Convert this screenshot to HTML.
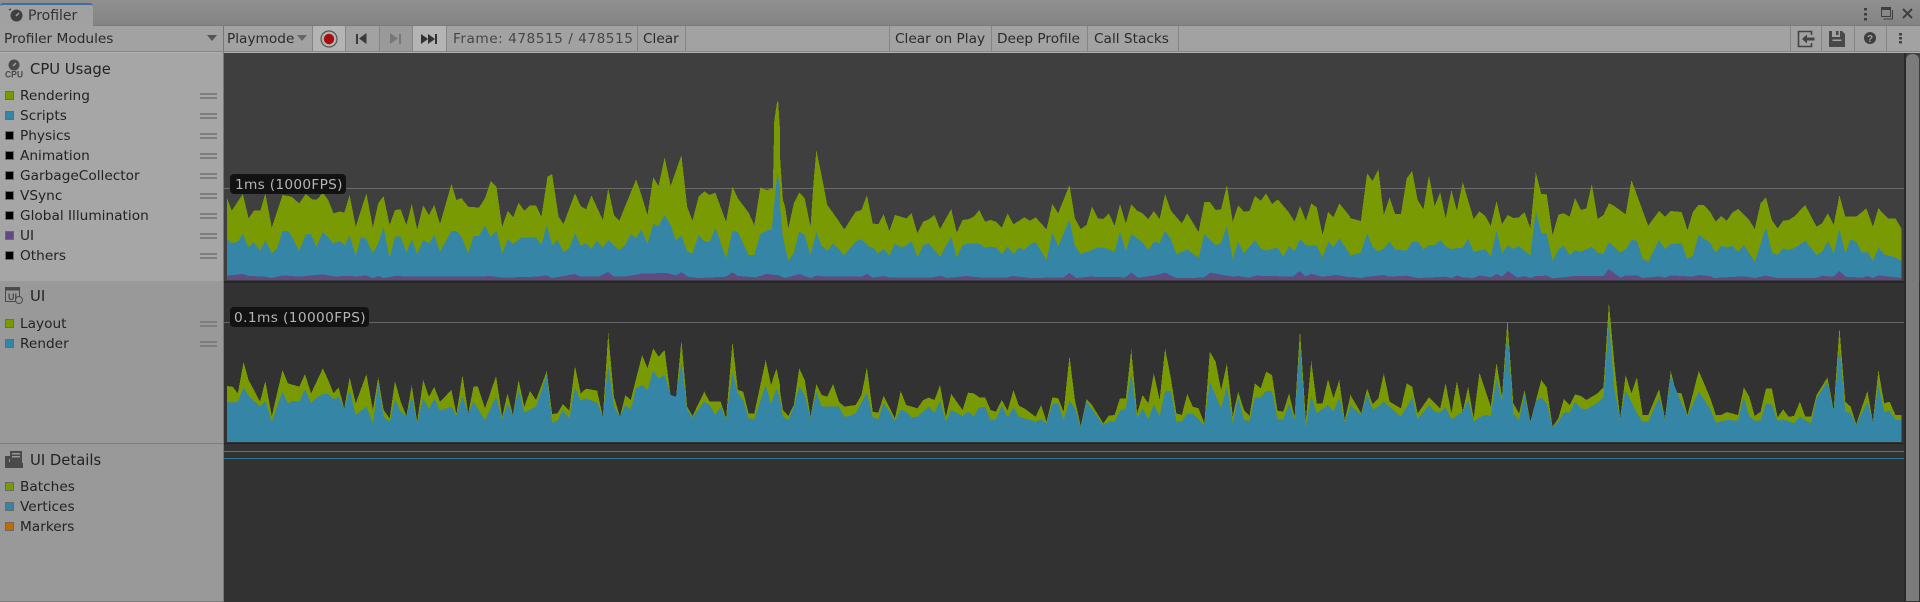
<!DOCTYPE html>
<html><head><meta charset="utf-8"><title>Profiler</title>
<style>
html,body{margin:0;padding:0;background:#333}
#r{position:relative;width:1920px;height:602px;overflow:hidden;background:#323232;font-family:"DejaVu Sans","Liberation Sans",sans-serif;font-size:13.7px;color:#232323}
#r div{position:absolute;box-sizing:border-box}
.t{white-space:nowrap;line-height:20px;height:20px}
.l{white-space:nowrap;line-height:22px;height:20px}
.hd{white-space:nowrap;line-height:22px;height:20px;font-size:14.8px}
.sw{width:9px;height:9px;left:5px;border:1px solid #6a6a6a}
.h{left:200px;width:17px;height:6px;border-top:2px solid #7d7d7d;border-bottom:2px solid #7d7d7d}
.sep{top:26px;width:1px;height:25px;background:#858585}
.btn{top:26px;height:25px}
svg{position:absolute;overflow:visible}
.g{fill:#7a9a04}.b{fill:#3485a6}.p{fill:#5f4a82}
</style></head><body><div id="r">
<div style="left:0;top:0;width:1920px;height:26px;background:linear-gradient(#909090,#838383)"></div>
<div style="left:0;top:3px;width:93px;height:23px;background:#a1a1a1;border-top:2px solid #3c6f9f;border-radius:3px 3px 0 0"></div>
<div style="left:0;top:25px;width:1920px;height:1px;background:#7b7b7b"></div>
<div style="left:0;top:25px;width:93px;height:1px;background:#a1a1a1"></div>
<svg style="left:7px;top:7px" width="18" height="16" viewBox="0 0 18 16"><circle cx="9.5" cy="8.500" r="6" fill="#3f3f3f"/><path d="M9 9l3-3" stroke="#a1a1a1" stroke-width="1.500"/><path d="M2 3l2-1" stroke="#3f3f3f" stroke-width="1.500"/></svg>
<div class="t" style="left:28px;top:6px;color:#333;font-size:14px">Profiler</div>

<div style="left:0;top:26px;width:1920px;height:25px;background:#a2a2a2"></div>
<div style="left:0;top:51px;width:1920px;height:1px;background:#868686"></div>
<div style="left:0;top:52px;width:1920px;height:1px;background:#b0b0b0"></div>
<div class="t" style="left:4px;top:29px;color:#2a2a2a">Profiler Modules</div>
<svg style="left:207px;top:35px" width="11" height="7"><path d="M0 0h10L5 6z" fill="#555"/></svg>
<div class="sep" style="left:223px;background:#777"></div>
<div class="t" style="left:227px;top:29px;color:#2a2a2a">Playmode</div>
<svg style="left:297px;top:35px" width="11" height="7"><path d="M0 0h10L5 6z" fill="#666"/></svg>
<div class="btn" style="left:313px;width:33px;background:#b4b4b4"></div>
<div class="btn" style="left:346px;width:34px;background:#a2a2a2"></div>
<div class="btn" style="left:380px;width:33px;background:#9a9a9a"></div>
<div class="btn" style="left:413px;width:33px;background:#b4b4b4"></div>
<div class="sep" style="left:312px"></div><div class="sep" style="left:345px"></div><div class="sep" style="left:379px"></div><div class="sep" style="left:412px"></div><div class="sep" style="left:446px"></div><div class="sep" style="left:637px"></div><div class="sep" style="left:685px"></div><div class="sep" style="left:889px"></div><div class="sep" style="left:991px"></div><div class="sep" style="left:1087px"></div><div class="sep" style="left:1178px"></div><div class="sep" style="left:1790px"></div><div class="sep" style="left:1821px"></div><div class="sep" style="left:1854px"></div><div class="sep" style="left:1886px"></div>
<svg style="left:320px;top:30px" width="18" height="18"><circle cx="9" cy="9" r="8" fill="none" stroke="#555" stroke-width="1.200"/><circle cx="9" cy="9" r="5.200" fill="#a80d0d"/></svg>
<svg style="left:355px;top:33px" width="14" height="12"><path d="M1 1h2v10H1zM11.500 0v11L4 5.500z" fill="#3a3a3a"/></svg>
<svg style="left:389px;top:33px" width="14" height="12"><path d="M1 0v11l8-5.500zM10 1h2v10h-2z" fill="#777"/></svg>
<svg style="left:420px;top:33px" width="18" height="12"><path d="M1 1v10l7-5zM8 1v10l7-5zM15 1h2v10h-2z" fill="#333"/></svg>
<div class="t" style="left:453px;top:29px;color:#464646;letter-spacing:.5px">Frame: 478515 / 478515</div>
<div class="t" style="left:643px;top:29px;color:#2a2a2a">Clear</div>
<div class="t" style="left:895px;top:29px;color:#2a2a2a">Clear on Play</div>
<div class="t" style="left:997px;top:29px;color:#2a2a2a">Deep Profile</div>
<div class="t" style="left:1094px;top:29px;color:#2a2a2a">Call Stacks</div>
<svg style="left:1797px;top:30px" width="18" height="18"><path d="M14.500 5V1.500h-13v15h13V13" fill="none" stroke="#444" stroke-width="1.600"/><path d="M5 9l5-4.500v3h7.500v3H10v3z" fill="#444"/></svg>
<svg style="left:1829px;top:30px" width="17" height="17"><path d="M0 1h3v6h8V1h2l3 3v13H0z" fill="#484848"/><path d="M7 1h2.500v4H7zM4 11h8v6H4z" fill="#484848"/><path d="M3.500 9.500h9V11h-9z" fill="#a2a2a2"/></svg>
<svg style="left:1864px;top:32px" width="13" height="13"><circle cx="6" cy="6" r="6" fill="#3e3e3e"/><text x="6" y="10" font-size="10" font-weight="bold" text-anchor="middle" font-family="Liberation Sans,sans-serif" fill="#a2a2a2">?</text></svg>
<svg style="left:1899px;top:32px" width="4" height="13"><path d="M0 1h3v2.500H0zM0 5h3v2.500H0zM0 9h3v2.500H0z" fill="#444"/></svg>
<svg style="left:1864px;top:7px" width="3" height="14"><path d="M0 1h3v2.500H0zM0 6h3v2.500H0zM0 11h3v2.500H0z" fill="#3e3e3e"/></svg>
<svg style="left:1881px;top:7px" width="13" height="13"><path d="M.5 .500h9v9h-9z" fill="none" stroke="#3e3e3e"/><path d="M0 0h10v3H0z" fill="#3e3e3e"/><path d="M11.500 3v9h-9" fill="none" stroke="#3e3e3e"/></svg>
<svg style="left:1902px;top:8px" width="12" height="12"><path d="M1 1l9 9M10 1l-9 9" stroke="#3e3e3e" stroke-width="2"/></svg>

<div style="left:0;top:53px;width:223px;height:228px;background:#a6a6a6"></div>
<div style="left:0;top:281px;width:223px;height:162px;background:#999"></div>
<div style="left:0;top:444px;width:223px;height:158px;background:#999"></div>
<div style="left:0;top:443px;width:223px;height:1px;background:#7c7c7c"></div>
<div style="left:0;top:601px;width:1920px;height:1px;background:#7c7c7c"></div>
<div style="left:223px;top:52px;width:1px;height:550px;background:#777"></div>
<div style="left:224px;top:53px;width:1696px;height:228px;background:#3f3f3f"></div>
<div style="left:224px;top:281px;width:1680px;height:2px;background:#262626"></div>
<div style="left:224px;top:283px;width:1696px;height:319px;background:#323232"></div>
<div style="left:224px;top:443px;width:1680px;height:1px;background:#232323"></div>

<svg style="left:5px;top:59px" width="19" height="19"><circle cx="9" cy="6" r="5.500" fill="#4a4a4a"/><path d="M8 7l3-3" stroke="#a6a6a6" stroke-width="1.300"/><text x="9" y="18.500" font-size="9.500" font-weight="bold" text-anchor="middle" textLength="18" lengthAdjust="spacingAndGlyphs" font-family="Liberation Sans,sans-serif" fill="#4a4a4a">CPU</text></svg>
<div class="hd" style="left:30px;top:59px">CPU Usage</div>
<div class="sw" style="top:91px;background:#7a9a04"></div><div class="l" style="left:20px;top:85px">Rendering</div><div class="h" style="top:93px"></div>
<div class="sw" style="top:111px;background:#3485a6"></div><div class="l" style="left:20px;top:105px">Scripts</div><div class="h" style="top:113px"></div>
<div class="sw" style="top:131px;background:#000"></div><div class="l" style="left:20px;top:125px">Physics</div><div class="h" style="top:133px"></div>
<div class="sw" style="top:151px;background:#000"></div><div class="l" style="left:20px;top:145px">Animation</div><div class="h" style="top:153px"></div>
<div class="sw" style="top:171px;background:#000"></div><div class="l" style="left:20px;top:165px">GarbageCollector</div><div class="h" style="top:173px"></div>
<div class="sw" style="top:191px;background:#000"></div><div class="l" style="left:20px;top:185px">VSync</div><div class="h" style="top:193px"></div>
<div class="sw" style="top:211px;background:#000"></div><div class="l" style="left:20px;top:205px">Global Illumination</div><div class="h" style="top:213px"></div>
<div class="sw" style="top:231px;background:#5f4a82"></div><div class="l" style="left:20px;top:225px">UI</div><div class="h" style="top:233px"></div>
<div class="sw" style="top:251px;background:#000"></div><div class="l" style="left:20px;top:245px">Others</div><div class="h" style="top:253px"></div>

<svg style="left:5px;top:287px" width="19" height="17"><path d="M.500 .500h14v14H.500z" fill="#999" stroke="#4a4a4a"/><path d="M1 1h13v2.500H1z" fill="#4a4a4a"/><text x="7.500" y="13" font-size="9" font-weight="bold" text-anchor="middle" font-family="Liberation Sans,sans-serif" fill="#4a4a4a">UI</text><circle cx="14" cy="13" r="3.500" fill="#999" stroke="#4a4a4a"/></svg>
<div class="hd" style="left:30px;top:286px">UI</div>
<div class="sw" style="top:319px;background:#7a9a04"></div><div class="l" style="left:20px;top:313px">Layout</div><div class="h" style="top:321px"></div>
<div class="sw" style="top:339px;background:#3485a6"></div><div class="l" style="left:20px;top:333px">Render</div><div class="h" style="top:341px"></div>

<svg style="left:5px;top:451px" width="18" height="18"><path d="M0 5h4v12h13v-4h1v-1H0z" fill="#4a4a4a"/><path d="M0 5h5V8H0zM0 11h9v6H0zM13 13h5v4h-5z" fill="#4a4a4a"/><path d="M5 0h12v12H5z" fill="#4a4a4a"/><path d="M7 2h8v1.500H7zM7 5h8v1.500H7z" fill="#999"/></svg>
<div class="hd" style="left:30px;top:450px">UI Details</div>
<div class="sw" style="top:482px;background:#7a9a04"></div><div class="l" style="left:20px;top:476px">Batches</div>
<div class="sw" style="top:502px;background:#3485a6"></div><div class="l" style="left:20px;top:496px">Vertices</div>
<div class="sw" style="top:522px;background:#c26a00"></div><div class="l" style="left:20px;top:516px">Markers</div>

<div style="left:224px;top:188px;width:1680px;height:1px;background:#6a6a6a"></div>
<div style="left:224px;top:322px;width:1680px;height:1px;background:#656565"></div>
<div style="left:224px;top:451px;width:1680px;height:1px;background:#6d7f20"></div>
<div style="left:224px;top:458px;width:1680px;height:1px;background:#2f7391"></div>

<svg style="left:0;top:0" width="1920" height="602" shape-rendering="crispEdges">
<g transform="translate(220,80) scale(.35714,.33333)">
<polygon class="g" points="20,600 20,355 33,392 64,342 80,415 95,392 113,392 127,340 145,443 175,345 200,350 222,370 240,342 258,358 272,358 288,338 303,360 318,400 335,394 348,398 363,345 380,440 410,340 428,442 443,370 458,348 475,435 490,390 506,388 522,435 537,372 552,448 569,376 585,405 600,375 616,432 648,312 662,360 676,354 695,380 725,383 742,355 758,303 774,320 790,440 806,392 821,412 836,368 852,392 868,376 885,377 900,410 917,290 930,282 948,410 962,432 994,340 1010,378 1025,388 1040,346 1072,420 1087,325 1103,405 1118,422 1165,298 1180,345 1197,405 1213,292 1228,318 1245,232 1262,318 1292,225 1308,380 1323,422 1340,350 1356,334 1371,345 1387,338 1417,425 1435,320 1450,355 1480,398 1496,435 1513,322 1530,330 1548,325 1552,120 1560,65 1563,65 1568,150 1568,600"/>
<polygon class="b" points="20,600 20,478 33,490 50,485 64,462 80,502 95,488 113,512 127,480 145,520 160,505 175,453 192,453 222,512 240,463 255,462 270,500 288,456 318,490 335,483 350,495 363,465 380,528 395,470 410,478 428,520 443,490 458,440 475,535 490,470 506,470 522,518 537,477 552,522 569,480 585,490 600,465 616,515 648,453 662,453 676,470 695,520 710,468 725,468 742,437 758,470 774,452 790,520 806,478 821,492 845,472 885,472 900,495 915,435 930,495 945,480 962,516 978,505 994,460 1010,497 1025,490 1040,507 1056,482 1072,503 1087,480 1103,497 1118,510 1135,495 1150,462 1165,475 1180,448 1197,492 1213,432 1228,437 1245,405 1262,435 1277,482 1292,465 1308,515 1323,520 1340,465 1356,483 1371,487 1387,443 1417,535 1435,453 1450,456 1480,525 1496,525 1513,462 1530,452 1545,448 1555,340 1561,275 1568,320 1568,600"/>
<polygon class="p" points="20,600 20,587 64,582 80,588 127,590 145,594 175,586 222,590 288,583 320,590 363,587 380,590 410,586 428,595 443,588 458,594 490,588 537,590 616,590 720,590 760,588 790,593 885,590 915,586 930,594 994,582 1010,590 1060,590 1087,576 1103,590 1135,590 1180,581 1250,579 1277,586 1292,577 1310,590 1340,594 1417,590 1435,577 1450,588 1500,592 1530,582 1568,586 1568,600"/>
</g>
<g transform="translate(780,80) scale(.36364,.33333)">
<polygon class="g" points="0,600 0,228 8,360 14,380 23,445 38,370 53,337 68,355 84,440 92,310 100,210 115,290 130,375 145,397 177,448 208,395 224,390 239,345 255,430 270,433 285,403 301,453 316,405 332,410 347,415 362,400 378,460 394,425 409,418 425,405 440,447 471,387 486,458 502,420 517,418 533,410 548,390 564,425 579,420 594,425 610,443 626,400 642,433 672,412 688,422 703,412 733,448 749,372 765,400 796,315 811,415 827,447 843,435 858,380 874,415 889,417 904,400 920,437 935,372 951,430 966,373 982,392 997,400 1013,417 1028,393 1044,417 1059,342 1075,392 1105,430 1120,400 1151,456 1167,366 1182,366 1198,390 1213,388 1229,315 1245,425 1260,376 1276,395 1291,393 1306,348 1322,362 1337,340 1353,372 1369,358 1400,398 1415,425 1430,378 1446,422 1461,370 1476,382 1492,465 1507,396 1522,412 1538,370 1568,410 1568,600"/>
<polygon class="b" points="0,600 0,380 8,470 23,543 38,518 53,455 68,465 84,525 100,456 115,498 130,512 146,490 177,525 208,485 224,477 245,500 255,502 270,520 285,507 301,527 316,490 332,502 347,497 362,483 378,533 394,495 409,490 440,530 471,470 486,533 502,495 517,491 548,490 564,503 579,500 594,502 610,522 626,500 642,522 657,503 672,510 688,493 703,486 733,540 749,458 765,500 796,418 811,497 827,522 858,510 874,502 889,502 920,515 935,455 951,512 966,462 997,487 1013,510 1028,485 1044,489 1059,452 1075,477 1090,523 1120,508 1151,533 1167,462 1198,496 1213,489 1229,438 1245,537 1260,485 1276,520 1306,480 1322,505 1337,512 1368,502 1384,530 1400,498 1415,513 1430,478 1446,495 1461,497 1476,497 1492,533 1507,485 1522,502 1538,475 1568,522 1568,600"/>
<polygon class="p" points="0,600 0,588 14,594 53,582 84,594 100,587 130,590 224,590 239,581 255,593 285,588 300,592 420,592 440,587 460,594 510,588 550,592 620,593 640,588 690,594 780,592 796,579 815,594 850,590 950,592 966,578 985,593 1030,586 1059,578 1090,594 1165,593 1183,578 1245,590 1260,588 1290,593 1310,587 1410,590 1430,573 1445,590 1460,581 1490,590 1530,585 1568,592 1568,600"/>
</g>
<g transform="translate(1350,80) scale(.36364,.33333)">
<polygon class="g" points="0,600 0,414 30,423 47,280 62,303 78,268 93,405 109,352 124,402 140,402 156,295 171,273 186,360 202,388 217,286 233,378 248,337 263,415 279,330 294,392 310,306 340,417 356,394 372,408 387,437 403,363 418,432 434,405 449,414 465,412 480,396 496,445 511,276 526,342 541,343 557,465 573,404 588,400 604,410 619,354 635,390 650,385 665,312 681,417 697,405 712,370 727,378 758,403 774,300 820,437 850,393 866,410 882,393 912,396 928,450 943,396 958,375 973,375 990,395 1006,425 1021,408 1036,422 1052,397 1067,387 1098,420 1113,447 1129,370 1144,352 1160,420 1176,445 1191,422 1206,420 1221,410 1252,375 1283,440 1298,430 1314,400 1330,435 1346,345 1362,410 1392,410 1420,385 1438,440 1453,385 1480,415 1500,415 1516,445 1516,600"/>
<polygon class="b" points="0,600 0,527 30,517 47,460 62,500 78,515 93,505 109,484 124,508 155,512 171,485 186,484 202,508 217,495 233,495 248,480 263,500 279,507 310,503 325,475 340,516 372,507 387,530 403,452 418,520 434,495 449,507 465,498 496,527 511,393 526,458 541,460 557,543 573,508 588,497 604,525 619,510 635,515 665,500 681,518 697,522 712,486 743,518 758,508 774,480 789,482 805,537 820,545 850,480 866,507 882,492 912,490 928,537 943,527 958,465 990,488 1006,518 1021,497 1036,502 1052,498 1067,515 1083,495 1113,545 1144,442 1160,517 1176,525 1191,505 1206,510 1221,505 1252,482 1283,525 1298,515 1314,483 1330,520 1346,447 1362,520 1377,478 1392,485 1408,518 1423,515 1438,543 1453,503 1469,523 1500,532 1516,543 1516,600"/>
<polygon class="p" points="0,600 0,590 30,594 47,590 93,585 109,590 156,587 186,594 263,590 280,594 294,586 310,592 340,594 356,586 387,592 403,582 418,590 434,573 460,593 480,588 496,594 511,588 541,587 557,595 619,588 697,588 712,567 743,593 758,586 789,586 805,594 850,589 866,593 882,586 940,590 958,585 990,588 1000,594 1083,589 1113,594 1144,587 1176,594 1280,594 1300,587 1330,590 1346,573 1362,590 1408,593 1423,588 1438,594 1453,586 1516,594 1516,600"/>
</g>
<g transform="translate(220,290) scale(.35714,.33333)">
<polygon class="g" points="20,456 20,288 35,290 50,310 66,216 80,270 100,310 112,335 127,273 145,378 175,240 190,280 222,290 238,252 255,310 288,235 303,270 318,310 332,292 348,355 363,262 380,340 410,252 428,360 443,262 458,360 475,385 490,273 506,335 522,378 537,286 552,395 569,270 585,320 600,291 616,335 648,300 662,372 679,255 695,370 710,290 722,290 742,355 773,258 790,380 805,310 820,375 836,270 852,350 868,303 885,330 915,243 930,372 945,370 960,342 978,362 994,228 1010,310 1025,296 1056,302 1072,380 1087,128 1103,320 1120,380 1135,315 1150,330 1182,195 1197,235 1213,175 1228,200 1245,180 1262,320 1277,322 1292,150 1308,350 1323,378 1356,305 1371,335 1402,335 1417,385 1435,155 1450,300 1465,305 1480,370 1496,370 1528,210 1543,285 1558,235 1568,285 1568,456"/>
<polygon class="b" points="20,456 20,335 35,338 50,335 66,292 80,318 112,350 127,333 145,395 175,305 190,340 205,332 222,335 238,298 255,340 272,322 288,312 303,312 318,328 332,320 348,355 363,300 380,375 410,350 428,400 443,280 458,380 475,395 490,328 506,365 522,378 537,320 552,400 569,325 585,358 600,325 616,362 648,350 662,378 679,318 695,370 710,335 742,390 773,320 790,387 805,340 820,375 836,300 852,368 885,350 915,255 930,397 945,392 960,360 978,385 994,292 1010,333 1025,325 1056,338 1072,380 1087,225 1103,350 1120,380 1135,345 1150,358 1165,295 1182,285 1197,300 1213,242 1228,265 1245,255 1262,315 1277,320 1292,215 1308,360 1323,382 1356,335 1371,345 1387,375 1402,350 1417,390 1435,248 1450,310 1465,330 1480,385 1496,388 1528,285 1543,342 1558,295 1568,325 1568,456"/>
</g>
<g transform="translate(780,290) scale(.36364,.33333)">
<polygon class="g" points="0,456 0,303 8,360 23,378 38,345 53,235 68,270 84,380 100,282 115,315 130,320 146,282 162,335 177,350 208,345 224,315 239,232 255,365 270,368 285,318 316,385 332,303 347,345 378,355 394,330 409,323 425,330 440,285 456,380 471,312 502,360 517,308 533,310 548,322 564,322 579,360 594,365 610,330 626,362 642,300 657,347 672,355 703,380 718,345 733,395 749,322 765,325 780,365 796,197 811,330 827,408 843,327 858,345 889,400 904,377 920,375 935,325 951,325 966,178 982,370 997,315 1013,340 1028,250 1044,330 1059,175 1075,265 1090,370 1105,375 1120,312 1135,350 1151,355 1167,400 1182,185 1198,215 1213,300 1229,220 1245,378 1260,305 1276,360 1291,378 1306,280 1322,295 1337,245 1353,255 1368,362 1384,365 1400,310 1415,380 1430,120 1446,390 1461,213 1476,340 1492,340 1507,268 1522,325 1538,270 1553,390 1568,320 1568,456"/>
<polygon class="b" points="0,456 0,330 8,380 23,390 38,350 53,290 68,315 84,385 100,305 115,350 162,350 177,380 192,378 208,370 239,308 255,382 270,387 285,338 316,392 332,358 347,365 362,382 378,380 409,350 425,368 440,332 456,395 471,360 502,378 517,365 533,378 548,352 564,350 579,390 594,388 610,347 626,382 642,352 657,380 703,395 718,388 733,400 749,342 765,340 780,390 796,332 811,355 827,412 843,335 889,405 904,395 920,395 935,362 951,355 966,250 982,385 997,355 1013,388 1028,342 1044,380 1059,303 1075,303 1090,395 1105,395 1120,370 1135,370 1167,405 1182,275 1213,355 1229,288 1245,400 1260,322 1276,390 1291,393 1306,322 1322,322 1337,303 1353,303 1368,388 1384,388 1400,340 1415,390 1430,165 1446,412 1461,318 1476,370 1507,345 1522,365 1538,322 1553,398 1568,350 1568,456"/>
</g>
<g transform="translate(1350,290) scale(.36364,.33333)">
<polygon class="g" points="0,456 0,313 31,370 47,295 62,342 78,325 93,250 109,335 140,355 156,280 171,290 186,370 217,322 248,355 263,280 279,370 294,273 310,365 325,290 340,385 356,247 387,350 403,218 418,320 433,88 449,340 465,370 480,300 496,395 526,270 541,292 557,410 573,385 588,327 604,345 619,313 635,318 650,330 681,310 697,292 712,37 727,220 743,385 758,255 774,310 789,262 805,375 820,375 850,297 866,385 882,243 897,308 912,310 928,375 959,243 990,322 1006,375 1021,375 1036,366 1067,375 1083,292 1098,320 1113,378 1129,365 1144,295 1160,295 1176,382 1191,358 1206,380 1221,378 1237,335 1252,380 1268,380 1283,315 1313,262 1330,360 1346,112 1362,335 1377,350 1392,402 1423,303 1438,395 1453,240 1469,340 1484,335 1500,375 1516,375 1516,456"/>
<polygon class="b" points="0,456 0,345 31,375 47,312 62,358 78,350 93,335 124,365 140,380 171,323 186,388 217,345 233,365 248,368 263,352 279,388 310,365 325,330 340,395 356,382 372,375 387,377 403,265 418,335 433,125 449,370 465,390 480,312 496,398 511,333 526,322 541,340 557,412 573,395 588,368 604,368 619,335 635,355 650,358 681,338 697,322 712,95 727,300 743,388 758,300 789,370 805,395 820,395 850,322 866,388 882,260 912,340 928,378 959,305 990,355 1006,398 1036,390 1067,392 1083,322 1098,378 1113,392 1129,392 1144,340 1160,345 1176,393 1191,388 1221,400 1237,380 1268,400 1283,325 1313,275 1330,365 1346,170 1362,365 1377,370 1392,405 1423,335 1438,395 1453,285 1469,365 1484,362 1500,390 1516,390 1516,456"/>
</g>
</svg>

<div style="left:224px;top:280px;width:3px;height:1px;background:#3f3f3f"></div>
<div style="left:230px;top:174px;width:116px;height:20px;background:#121212;border-radius:4px;color:#b4b4b4;padding-left:5px;font-size:13.7px;line-height:22px;white-space:nowrap;letter-spacing:.3px">1ms (1000FPS)</div>
<div style="left:230px;top:307px;width:139px;height:20px;background:#121212;border-radius:4px;color:#b4b4b4;padding-left:4px;font-size:13.7px;line-height:22px;white-space:nowrap;letter-spacing:.4px">0.1ms (10000FPS)</div>

<div style="left:1904px;top:53px;width:2px;height:548px;background:#2a2a2a"></div>
<div style="left:1906px;top:54px;width:13px;height:547px;background:#7b7b7b;border-radius:6px 6px 0 0"></div>
</div></body></html>
